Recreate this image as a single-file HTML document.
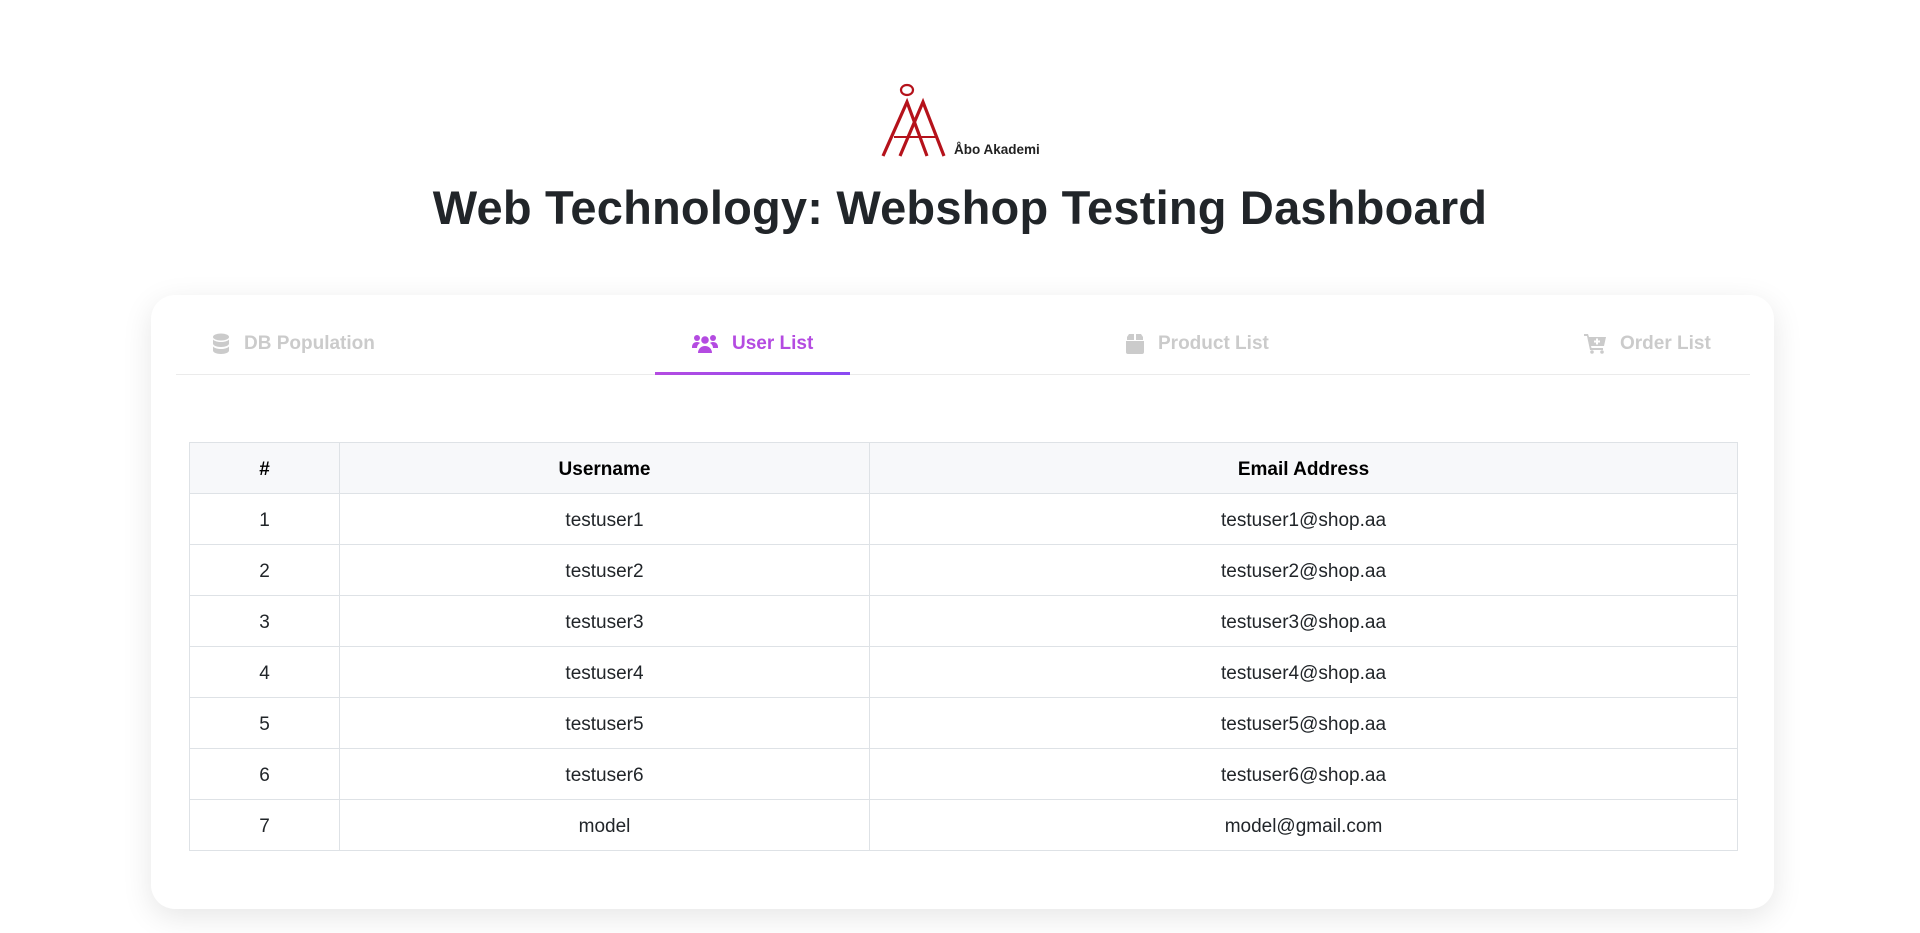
<!DOCTYPE html>
<html><head><meta charset="utf-8"><style>
*{box-sizing:border-box;margin:0;padding:0}
body{width:1920px;height:933px;background:#fff;font-family:"Liberation Sans",sans-serif;color:#212529;position:relative;overflow:hidden}
.logo{position:absolute;left:880px;top:82px}
h1{position:absolute;left:0;width:1920px;top:180px;text-align:center;font-size:47px;font-weight:bold;color:#212529;letter-spacing:0.2px}
.card{position:absolute;left:151px;top:295px;width:1623px;height:614px;background:#fff;border-radius:24px;box-shadow:0 8px 30px rgba(0,0,0,0.10)}
.divider{position:absolute;left:176px;top:374px;width:1574px;height:1px;background:#ebebeb}
.ul{position:absolute;left:655px;top:372px;width:195px;height:3px;background:linear-gradient(90deg,#b44be1,#8a4af3)}
.tab{position:absolute;top:333px;font-size:19px;font-weight:bold;color:#cbcbcb;display:flex;align-items:center;gap:14px;height:22px}
.tab svg{fill:#cbcbcb}
.tab.act{color:#b44be1}.tab.act svg{fill:#b44be1}
table{position:absolute;left:189px;top:442px;width:1549px;border-collapse:collapse;font-size:19px}
td,th{border:1px solid #dee2e6;height:51px;text-align:center;padding:3px 0 0}
th{background:#f7f8fa;font-weight:bold;color:#000}
</style></head><body>
<svg class="logo" width="180" height="76" viewBox="0 0 180 76">
<ellipse cx="27" cy="8" rx="6" ry="5" fill="none" stroke="#b5121b" stroke-width="2.2"/>
<g stroke="#b5121b" stroke-width="3.2" fill="none">
<path d="M3 74 L27 20 L47 74"/>
<path d="M20 74 L43 20 L64 74"/>
</g>
<path d="M14 55 H58" stroke="#b5121b" stroke-width="2"/>
<text x="74" y="72" font-family="Liberation Sans" font-weight="bold" font-size="13.5" fill="#222">Åbo Akademi</text>
</svg>
<h1>Web Technology: Webshop Testing Dashboard</h1>
<div class="card"></div>
<div class="divider"></div>
<div class="ul"></div>
<div class="tab" style="left:212px"><svg width="18" height="22" viewBox="0 0 18 22"><ellipse cx="9" cy="4" rx="8" ry="3.5"/><path d="M1 6.5v4c0 2 3.5 3.5 8 3.5s8-1.5 8-3.5v-4c-1.5 1.6-4.5 2.5-8 2.5s-6.5-.9-8-2.5z"/><path d="M1 13.5v4c0 2 3.5 3.5 8 3.5s8-1.5 8-3.5v-4c-1.5 1.6-4.5 2.5-8 2.5s-6.5-.9-8-2.5z"/></svg>DB Population</div>
<div class="tab act" style="left:692px"><svg width="26" height="20" viewBox="0 0 26 20"><circle cx="5" cy="4" r="3"/><circle cx="21" cy="4" r="3"/><circle cx="13" cy="6" r="3.8"/><path d="M0 13c0-3 2-5 5-5 1.5 0 2.5.5 3 1-2 1.2-3 3-3 5H0z"/><path d="M26 13c0-3-2-5-5-5-1.5 0-2.5.5-3 1 2 1.2 3 3 3 5h5z"/><path d="M6 19c0-4 3-7 7-7s7 3 7 7z"/></svg>User List</div>
<div class="tab" style="left:1126px"><svg width="18" height="20" viewBox="0 0 18 20"><path d="M1 3l2-3h5v6H1z"/><path d="M10 0h5l2 3v3h-7z"/><path d="M0 7h18v11a2 2 0 0 1-2 2H2a2 2 0 0 1-2-2z"/></svg>Product List</div>
<div class="tab" style="left:1584px"><svg width="22" height="20" viewBox="0 0 22 20"><path d="M0 0h4l1 3h17l-2 9H7l.5 2H19v2H6L3 2H0z"/><circle cx="8" cy="18" r="1.8"/><circle cx="18" cy="18" r="1.8"/><path d="M12 4.5h2v2h2v2h-2v2h-2v-2h-2v-2h2z" fill="#fff"/></svg>Order List</div>
<table>
<colgroup><col style="width:150px"><col style="width:530px"><col></colgroup>
<tr><th>#</th><th>Username</th><th>Email Address</th></tr>
<tr><td>1</td><td>testuser1</td><td>testuser1@shop.aa</td></tr>
<tr><td>2</td><td>testuser2</td><td>testuser2@shop.aa</td></tr>
<tr><td>3</td><td>testuser3</td><td>testuser3@shop.aa</td></tr>
<tr><td>4</td><td>testuser4</td><td>testuser4@shop.aa</td></tr>
<tr><td>5</td><td>testuser5</td><td>testuser5@shop.aa</td></tr>
<tr><td>6</td><td>testuser6</td><td>testuser6@shop.aa</td></tr>
<tr><td>7</td><td>model</td><td>model@gmail.com</td></tr>
</table>
</body></html>
